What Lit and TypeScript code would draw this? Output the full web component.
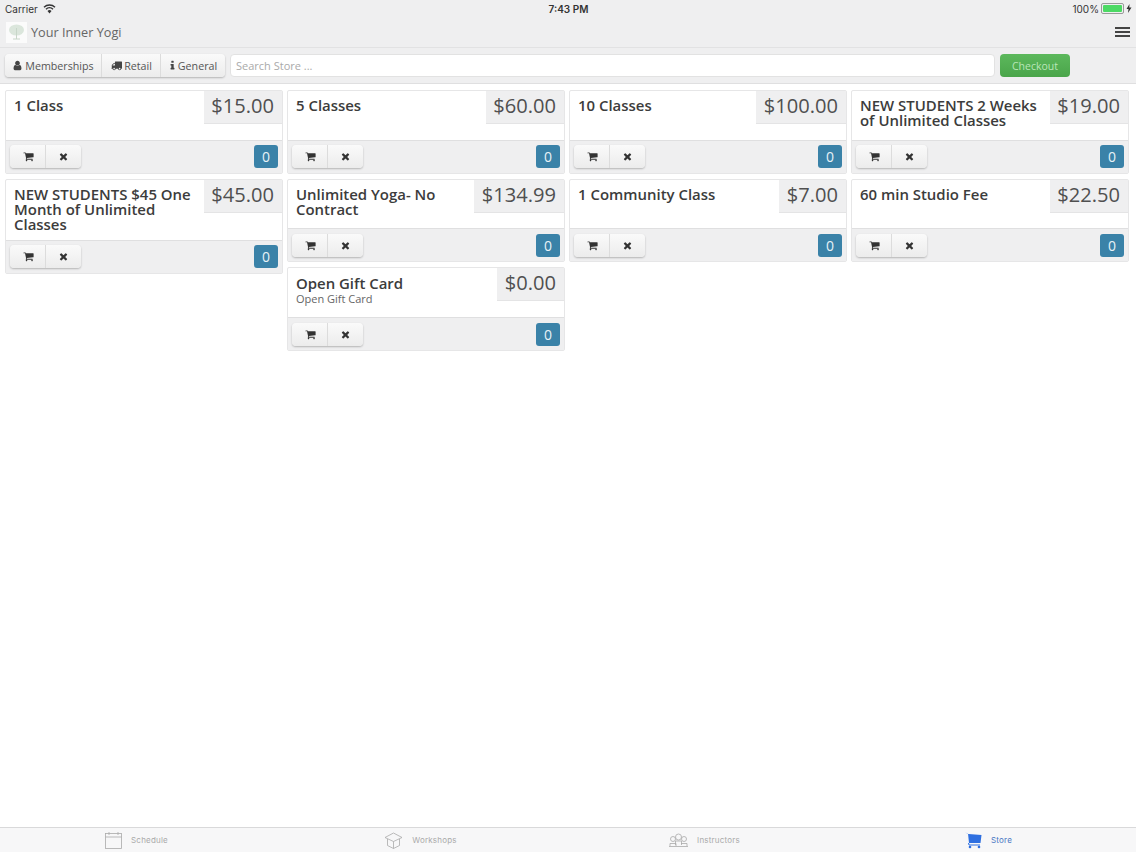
import { LitElement, html, css } from "lit";
import { customElement } from "lit/decorators.js";

const fa = (d: string, cls = "") => html`<svg class="fa ${cls}" viewBox="0 0 1792 1792"><path d=${d} fill="currentColor"></path></svg>`;
const CART = "M704 1536q0 52-38 90t-90 38-90-38-38-90 38-90 90-38 90 38 38 90zm896 0q0 52-38 90t-90 38-90-38-38-90 38-90 90-38 90 38 38 90zm128-1088v512q0 24-16.500 42.500t-40.500 21.500l-1044 122q13 60 13 70 0 16-24 64h920q26 0 45 19t19 45-19 45-45 19h-1024q-26 0-45-19t-19-45q0-11 8-31.500t16-36 21.500-40 15.500-29.500l-177-823h-204q-26 0-45-19t-19-45 19-45 45-19h256q16 0 28.500 6.500t19.500 15.500 13 24.500 8 26 5.500 29.500 4.500 26h1201q26 0 45 19t19 45z";
const TIMES = "M1490 1322q0 40-28 68l-136 136q-28 28-68 28t-68-28l-294-294-294 294q-28 28-68 28t-68-28l-136-136q-28-28-28-68t28-68l294-294-294-294q-28-28-28-68t28-68l136-136q28-28 68-28t68 28l294 294 294-294q28-28 68-28t68 28l136 136q28 28 28 68t-28 68l-294 294 294 294q28 28 28 68z";
const USER = "M1536 1399q0 109-62.500 187t-150.500 78h-854q-88 0-150.500-78t-62.500-187q0-85 8.500-160.500t31.500-152 58.500-131 94-89 134.500-34.500q131 128 313 128t313-128q76 0 134.500 34.500t94 89 58.500 131 31.500 152 8.500 160.500zm-256-887q0 159-112.500 271.500t-271.500 112.500-271.500-112.500-112.500-271.500 112.500-271.500 271.500-112.500 271.500 112.500 112.500 271.500z";
const TRUCK = "M640 1408q0-52-38-90t-90-38-90 38-38 90 38 90 90 38 90-38 38-90zm-384-512h384v-256h-158q-13 0-22 9l-195 195q-9 9-9 22v30zm1280 512q0-52-38-90t-90-38-90 38-38 90 38 90 90 38 90-38 38-90zm256-1088v1024q0 15-4 26.500t-13.500 18.500-16.500 11.500-23.500 6-22.500 2-25.500 0-22.500-.5q0 106-75 181t-181 75-181-75-75-181h-384q0 106-75 181t-181 75-181-75-75-181h-64q-3 0-22.500.5t-25.500 0-22.500-2-23.500-6-16.500-11.500-13.500-18.500-4-26.500q0-26 19-45t45-19v-320q0-8-.5-35t0-38 2.500-34.500 6.500-37 14-30.500 22.500-30l198-198q19-19 50.500-32t58.500-13h160v-192q0-26 19-45t45-19h1024q26 0 45 19t19 45z";
const INFO = "M1216 1344v128q0 26-19 45t-45 19h-512q-26 0-45-19t-19-45v-128q0-26 19-45t45-19h64v-384h-64q-26 0-45-19t-19-45v-128q0-26 19-45t45-19h384q26 0 45 19t19 45v576h64q26 0 45 19t19 45zm-128-1152v192q0 26-19 45t-45 19h-256q-26 0-45-19t-19-45v-192q0-26 19-45t45-19h256q26 0 45 19t19 45z";

interface Item { t: string; p: string; s?: string }
const COLS: Item[][] = [
  [{ t: "1 Class", p: "$15.00" }, { t: "NEW STUDENTS $45 One Month of Unlimited Classes", p: "$45.00" }],
  [{ t: "5 Classes", p: "$60.00" }, { t: "Unlimited Yoga- No Contract", p: "$134.99" }, { t: "Open Gift Card", p: "$0.00", s: "Open Gift Card" }],
  [{ t: "10 Classes", p: "$100.00" }, { t: "1 Community Class", p: "$7.00" }],
  [{ t: "NEW STUDENTS 2 Weeks of Unlimited Classes", p: "$19.00" }, { t: "60 min Studio Fee", p: "$22.50" }],
];

@customElement("app-root")
export class AppRoot extends LitElement {
  static styles = css`
    :host { display: flex; flex-direction: column; height: 852px; overflow: hidden; background: #fff; font-family: "Open Sans", sans-serif; color: #333; }
    .top { background: #efeff0; }
    .status { height: 17px; display: grid; grid-template-columns: 1fr auto 1fr; align-items: center; padding: 0 4px 0 5px; font: 10px "Inter", "Liberation Sans", sans-serif; color: #333; }
    .status .l { display: flex; align-items: center; gap: 5px; }
    .status .c { font-weight: 600; }
    .status .r { display: flex; justify-content: flex-end; align-items: center; gap: 2px; }
    .batt { width: 19px; height: 7px; border: 1px solid #999; border-radius: 2px; padding: 1px; box-sizing: content-box; display: flex; }
    .batt i { flex: 1; background: #4cd964; border-radius: 1px; }
    .nav { height: 31px; display: flex; align-items: center; padding: 0 6px; gap: 4px; border-bottom: 1px solid #e2e2e3; box-sizing: border-box; }
    .logo { width: 21px; height: 21px; background: #fbfbfb; display: flex; }
    .brand { font: 12.7px "Open Sans", sans-serif; color: #666; flex: 1; }
    .burger { width: 15px; display: flex; flex-direction: column; gap: 2.5px; }
    .burger i { height: 1.5px; background: #444; }
    .tools { height: 36px; display: flex; align-items: center; padding: 0 5px; box-sizing: border-box; border-bottom: 1px solid #dfdfe0; }
    .seg { display: flex; height: 23px; border-radius: 4px; box-shadow: 0 1px 2px rgba(0,0,0,.25); background: linear-gradient(#fafafa, #ececec); }
    .seg button { all: unset; display: flex; align-items: center; justify-content: center; gap: 2px; font: 10.7px "Open Sans", sans-serif; color: #555; border-right: 1px solid #dcdcdc; box-sizing: border-box; }
    .seg button:last-child { border-right: 0; }
    .fa { width: 11px; height: 11px; color: #444; flex: none; }
    .fa.info { margin: 0 -2px 0 -2px; }
    .seg .w-mem { width: 97px; }
    .seg .w-ret { width: 59px; padding-left: 1px; }
    .seg .w-gen { width: 64px; }
    .search { width: 765px; height: 23px; margin-left: 5px; background: #fff; border: 1px solid #e2e2e2; border-radius: 4px; box-sizing: border-box; font-size: 11px; color: #aaa; padding: 0 5px; line-height: 21px; }
    .checkout { width: 70px; height: 23px; margin-left: 5px; background: linear-gradient(#5cb85c, #4aa54a); border-radius: 4px; color: #b9e6b9; font-size: 10.5px; display: flex; align-items: center; justify-content: center; }
    .grid { flex: 1; display: grid; grid-template-columns: repeat(4, 278px); gap: 4px; padding: 6px 5px 0; align-content: start; align-items: start; }
    .col { display: flex; flex-direction: column; gap: 5px; }
    .card { border: 1px solid #e6e6e7; border-radius: 2px; background: #fff; }
    .body { display: flex; justify-content: space-between; align-items: flex-start; min-height: 48.7px; }
    .title { padding: 7.2px 8px 7.8px 8px; font-size: 14.95px; line-height: 15px; font-weight: 600; color: #3c3c3c; }
    .sub { font-size: 11px; line-height: 15px; font-weight: 400; color: #666; }
    .price { flex: none; height: 33px; padding: 0 8px 0 7.5px; background: #efeff0; border-bottom: 1px solid #e4e4e5; box-sizing: border-box; font-size: 20.1px; line-height: 30px; color: #505050; }
    .foot { height: 33px; display: flex; justify-content: space-between; align-items: center; padding: 0 4px; background: #efeff0; border-top: 1px solid #dfdfe0; box-sizing: border-box; }
    .foot .seg button { width: 36px; padding-left: 1px; }
    .foot .seg button:last-child { width: 35px; padding: 0 1px 0 0; }
    .foot .fa { color: #333; width: 11px; height: 11px; }
    .badge { width: 24px; height: 23px; background: #3a82a8; border-radius: 3px; color: #e8f2f7; font-size: 14px; line-height: 23px; text-align: center; }
    .tabs { height: 25px; display: grid; grid-template-columns: repeat(4, 1fr); background: #f7f7f8; border-top: 1px solid #d9d9da; box-sizing: border-box; }
    .tab { display: flex; align-items: center; justify-content: center; gap: 9px; padding-right: 11px; font: 8px "Inter", "Liberation Sans", sans-serif; letter-spacing: .2px; color: #aaa; }
    .tab svg { display: block; }
    .tab.on { color: #4a78c4; }
  `;

  private card(i: Item) {
    return html`<div class="card">
      <div class="body">
        <div class="title">${i.t}${i.s ? html`<div class="sub">${i.s}</div>` : ""}</div>
        <div class="price">${i.p}</div>
      </div>
      <div class="foot">
        <div class="seg"><button>${fa(CART)}</button><button>${fa(TIMES)}</button></div>
        <div class="badge">0</div>
      </div>
    </div>`;
  }

  render() {
    return html`
      <div class="top">
        <div class="status">
          <div class="l">Carrier
            <svg width="13" height="10" viewBox="0 0 13 10"><path d="M6.500 9.500 L4.500 7 A3 3 0 0 1 8.500 7Z" fill="#333"></path><path d="M3 5.200A5 5 0 0 1 10 5.200" stroke="#333" stroke-width="1.400" fill="none"></path><path d="M1 3.200A8 8 0 0 1 12 3.200" stroke="#333" stroke-width="1.400" fill="none"></path></svg>
          </div>
          <div class="c">7:43 PM</div>
          <div class="r">100% <span class="batt"><i></i></span>
            <svg width="6" height="9" viewBox="0 0 6 9"><path d="M3.500 0 L0.500 5H2.500L2 9 L5.500 3.500H3.300Z" fill="#333"></path></svg>
          </div>
        </div>
        <div class="nav">
          <div class="logo">
            <svg width="21" height="21" viewBox="0 0 21 21"><ellipse cx="10.500" cy="8" rx="7.500" ry="5.500" fill="#dbe6dc"></ellipse><path d="M10.500 6V17M7 17H14" stroke="#c8d6c9" fill="none"></path></svg>
          </div>
          <div class="brand">Your Inner Yogi</div>
          <div class="burger"><i></i><i></i><i></i></div>
        </div>
        <div class="tools">
          <div class="seg">
            <button class="w-mem">${fa(USER)}Memberships</button>
            <button class="w-ret">${fa(TRUCK)}Retail</button>
            <button class="w-gen">${fa(INFO, "info")}General</button>
          </div>
          <div class="search">Search Store ...</div>
          <div class="checkout">Checkout</div>
        </div>
      </div>
      <div class="grid">
        ${COLS.map((c) => html`<div class="col">${c.map((i) => this.card(i))}</div>`)}
      </div>
      <div class="tabs">
        <div class="tab">
          <svg width="17" height="17" viewBox="0 0 17 17" fill="none" stroke="#aaa" stroke-width=".8"><rect x=".5" y="1.500" width="16" height="15"></rect><path d="M.5 5H16.500M4 0V3M13 0V3"></path></svg>
          <span>Schedule</span>
        </div>
        <div class="tab">
          <svg width="19" height="17" viewBox="0 0 19 17" fill="none" stroke="#aaa" stroke-width=".8"><path d="M1 5.500 9.500 1 18 5.500 9.500 9.500ZM3.500 7V13.500L9.500 16.500 15.500 13.500V7M9.500 9.500V16.500"></path></svg>
          <span>Workshops</span>
        </div>
        <div class="tab">
          <svg width="19" height="15" viewBox="0 0 19 15" fill="none" stroke="#aaa" stroke-width=".8"><circle cx="4" cy="6" r="2.500"></circle><circle cx="9.500" cy="4" r="3"></circle><circle cx="15" cy="6" r="2.500"></circle><path d="M1 13V10.500H7V13M6.500 12V8H12.500V12M12 10.500H18V13M0 13.500H19"></path></svg>
          <span>Instructors</span>
        </div>
        <div class="tab on">
          <svg width="17" height="17" viewBox="0 0 17 17"><path d="M0 .5 3 1.500 4 11H15.500L16.500 3 3.500 2Z" fill="#2e6fe0"></path><path d="M3.500 11 4 13H15" stroke="#2e6fe0" fill="none"></path><circle cx="5" cy="15" r="1.300" fill="#2e6fe0"></circle><circle cx="14" cy="15" r="1.300" fill="#2e6fe0"></circle></svg>
          <span>Store</span>
        </div>
      </div>
    `;
  }
}
